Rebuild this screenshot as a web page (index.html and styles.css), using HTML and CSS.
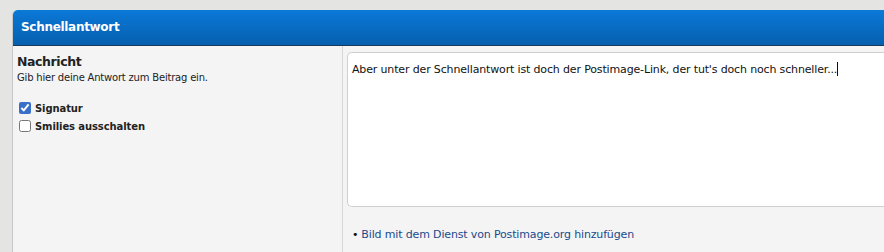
FILE: index.html
```html
<!DOCTYPE html>
<html lang="de">
<head>
    <meta charset="UTF-8">
    <title>Schnellantwort</title>
    <link rel="stylesheet" href="styles.css">
</head>
<body>

    <div class="panel">
        <h2 class="panel-head">Schnellantwort</h2>
        <div class="panel-body">
            <div class="side">
                <h3>Nachricht</h3>
                <p class="hint">Gib hier deine Antwort zum Beitrag ein.</p>
                <label class="opt"><input type="checkbox" checked> Signatur</label>
                <label class="opt"><input type="checkbox"> Smilies ausschalten</label>
            </div>
            <div class="main">
                <div class="editor">Aber unter der Schnellantwort ist doch der Postimage-Link, der tut's doch noch schneller...<span class="caret"></span></div>
                <ul class="links">
                    <li><a href="#">Bild mit dem Dienst von Postimage.org hinzufügen</a></li>
                </ul>
            </div>
        </div>
    </div>

</body>
</html>
```

FILE: styles.css
```css
body {
    margin: 0;
    padding: 10px 0 0 12px;
    background-color: #e4e4e2;
    font-family: "DejaVu Sans", Verdana, sans-serif;
    height: 252px;
    box-sizing: border-box;
    overflow: hidden;
}

.panel {
    border-left: 1px solid #c8c8c8;
    border-top-left-radius: 5px;
    background-color: #f4f4f4;
    height: 242px;
}

.panel-head {
    margin: 0;
    height: 35px;
    line-height: 34px;
    padding-left: 8px;
    font-size: 12px;
    letter-spacing: -0.3px;
    font-weight: bold;
    color: #fff;
    background: linear-gradient(#0b79d8, #055fae);
    border-top-left-radius: 5px;
    border-bottom: 1px solid #163a5c;
}

.panel-body {
    display: flex;
    height: 206px;
}

.side {
    width: 325px;
    padding: 8px 0 0 4px;
    border-right: 1px solid #d6d6d6;
}

.side h3 {
    margin: 0;
    font-size: 12.5px;
    letter-spacing: -0.4px;
    color: #222;
}

.hint {
    margin: 3px 0 16px;
    font-size: 10px;
    letter-spacing: -0.2px;
    color: #222;
}

.opt {
    display: flex;
    align-items: center;
    gap: 4px;
    font-size: 10px;
    letter-spacing: -0.1px;
    font-weight: bold;
    color: #222;
    height: 18px;
}

.opt input {
    margin: 0 0 0 2px;
    width: 12px;
    height: 12px;
    accent-color: #3a6fc8;
}

.main {
    flex: 1;
    padding: 6px 0 0 4px;
}

.editor {
    height: 144px;
    background-color: #fff;
    border: 1px solid #cfcfcf;
    border-right: none;
    border-radius: 5px 0 0 5px;
    padding: 9px 0 0 4px;
    font-size: 11px;
    letter-spacing: -0.15px;
    color: #111;
}

.caret {
    display: inline-block;
    width: 1px;
    height: 14px;
    background-color: #111;
    vertical-align: -3px;
}

.links {
    margin: 21px 0 0;
    padding: 0 0 0 5px;
    list-style: none;
    font-size: 11px;
    letter-spacing: -0.15px;
}

.links li::before {
    content: "\2022";
    color: #111;
    margin-right: 3px;
}

.links a {
    color: #1a4a8c;
    text-decoration: none;
}
```
